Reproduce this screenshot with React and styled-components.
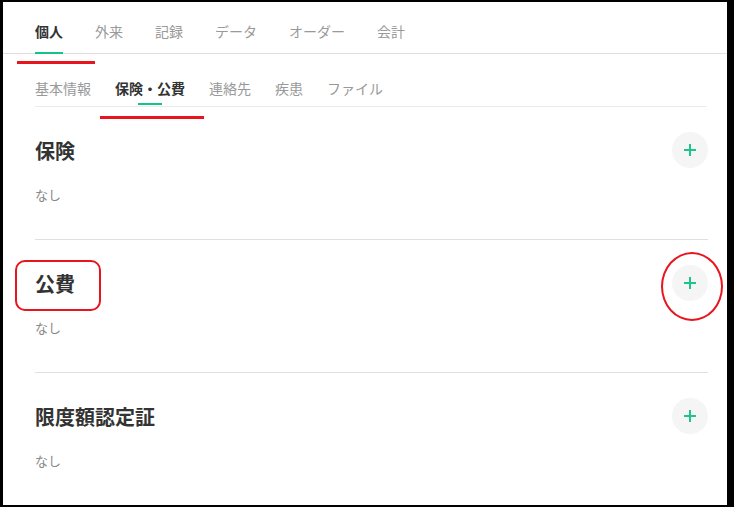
import React from "react";
import styled, { createGlobalStyle } from "styled-components";

const GlobalStyle = createGlobalStyle`
  html, body {
    margin: 0;
    padding: 0;
    background: #000;
  }
  body {
    font-family: "Noto Sans CJK JP", "Noto Sans", sans-serif;
  }
`;

const Frame = styled.div`
  position: relative;
  margin: 2px 0 0 3px;
  width: 724px;
  height: 503px;
  overflow: hidden;
  background: #fff;
`;

const TopTabs = styled.nav`
  display: flex;
  gap: 32px;
  height: 51px;
  padding: 0 32px;
  border-bottom: 1px solid #e0e0e0;
`;

const TopTab = styled.div`
  position: relative;
  display: flex;
  align-items: center;
  padding-top: 6px;
  box-sizing: border-box;
  font-size: 14px;
  font-weight: ${(p) => (p.$active ? 700 : 400)};
  color: ${(p) => (p.$active ? "#333" : "#999")};
  &::after {
    content: "";
    display: ${(p) => (p.$active ? "block" : "none")};
    position: absolute;
    left: 0;
    right: 0;
    bottom: -1px;
    height: 2px;
    background: #12c48b;
  }
`;

const SubTabs = styled.nav`
  display: flex;
  gap: 24px;
  height: 52px;
  margin: 0 20px 0 32px;
  border-bottom: 1px solid #ececec;
`;

const SubTab = styled.div`
  position: relative;
  display: flex;
  align-items: center;
  padding-top: 16px;
  box-sizing: border-box;
  font-size: 14px;
  font-weight: ${(p) => (p.$active ? 700 : 400)};
  color: ${(p) => (p.$active ? "#333" : "#999")};
  &::after {
    content: "";
    display: ${(p) => (p.$active ? "block" : "none")};
    position: absolute;
    left: 50%;
    width: 24px;
    margin-left: -12px;
    bottom: 1px;
    height: 2px;
    background: #12c48b;
  }
`;

const Sections = styled.div`
  margin: 0 19px 0 32px;
`;

const Section = styled.section`
  padding: 25px 0 34px;
  border-bottom: 1px solid #e0e0e0;
`;

const SectionHead = styled.div`
  display: flex;
  align-items: center;
  justify-content: space-between;
  height: 36px;
`;

const Title = styled.h2`
  margin: 0;
  font-size: 20px;
  font-weight: 700;
  color: #333;
`;

const AddButton = styled.button`
  display: flex;
  align-items: center;
  justify-content: center;
  width: 36px;
  height: 36px;
  padding: 0;
  border: none;
  border-radius: 50%;
  background: #f5f5f5;
  cursor: pointer;
`;

const Empty = styled.p`
  margin: 17px 0 0;
  font-size: 13px;
  line-height: 20px;
  color: #888;
`;

// red review marks drawn over the screen
const Mark = styled.div`
  position: absolute;
  pointer-events: none;
  border-color: #e8141e;
  border-style: solid;
`;

const Underline = styled(Mark)`
  border-width: 3px 0 0;
`;

const Box = styled(Mark)`
  border-width: 2px;
  border-radius: ${(p) => p.$radius};
`;

const Plus = () => (
  <svg width="14" height="14" viewBox="0 0 14 14">
    <path d="M7 1v12M1 7h12" stroke="#1ec48c" strokeWidth="2" fill="none" />
  </svg>
);

const topTabs = ["個人", "外来", "記録", "データ", "オーダー", "会計"];
const subTabs = ["基本情報", "保険・公費", "連絡先", "疾患", "ファイル"];
const sections = ["保険", "公費", "限度額認定証"];

export default function App() {
  return (
    <>
      <GlobalStyle />
      <Frame>
        <TopTabs>
          {topTabs.map((t, i) => (
            <TopTab key={t} $active={i === 0}>
              {t}
            </TopTab>
          ))}
        </TopTabs>
        <SubTabs>
          {subTabs.map((t, i) => (
            <SubTab key={t} $active={i === 1}>
              {t}
            </SubTab>
          ))}
        </SubTabs>
        <Sections>
          {sections.map((s) => (
            <Section key={s}>
              <SectionHead>
                <Title>{s}</Title>
                <AddButton aria-label="追加">
                  <Plus />
                </AddButton>
              </SectionHead>
              <Empty>なし</Empty>
            </Section>
          ))}
        </Sections>

        <Underline style={{ left: 14, top: 59, width: 78 }} />
        <Underline style={{ left: 97, top: 114, width: 104 }} />
        <Box $radius="10px" style={{ left: 12, top: 258, width: 82, height: 47 }} />
        <Box $radius="50%" style={{ left: 658, top: 250, width: 58, height: 65 }} />
      </Frame>
    </>
  );
}
